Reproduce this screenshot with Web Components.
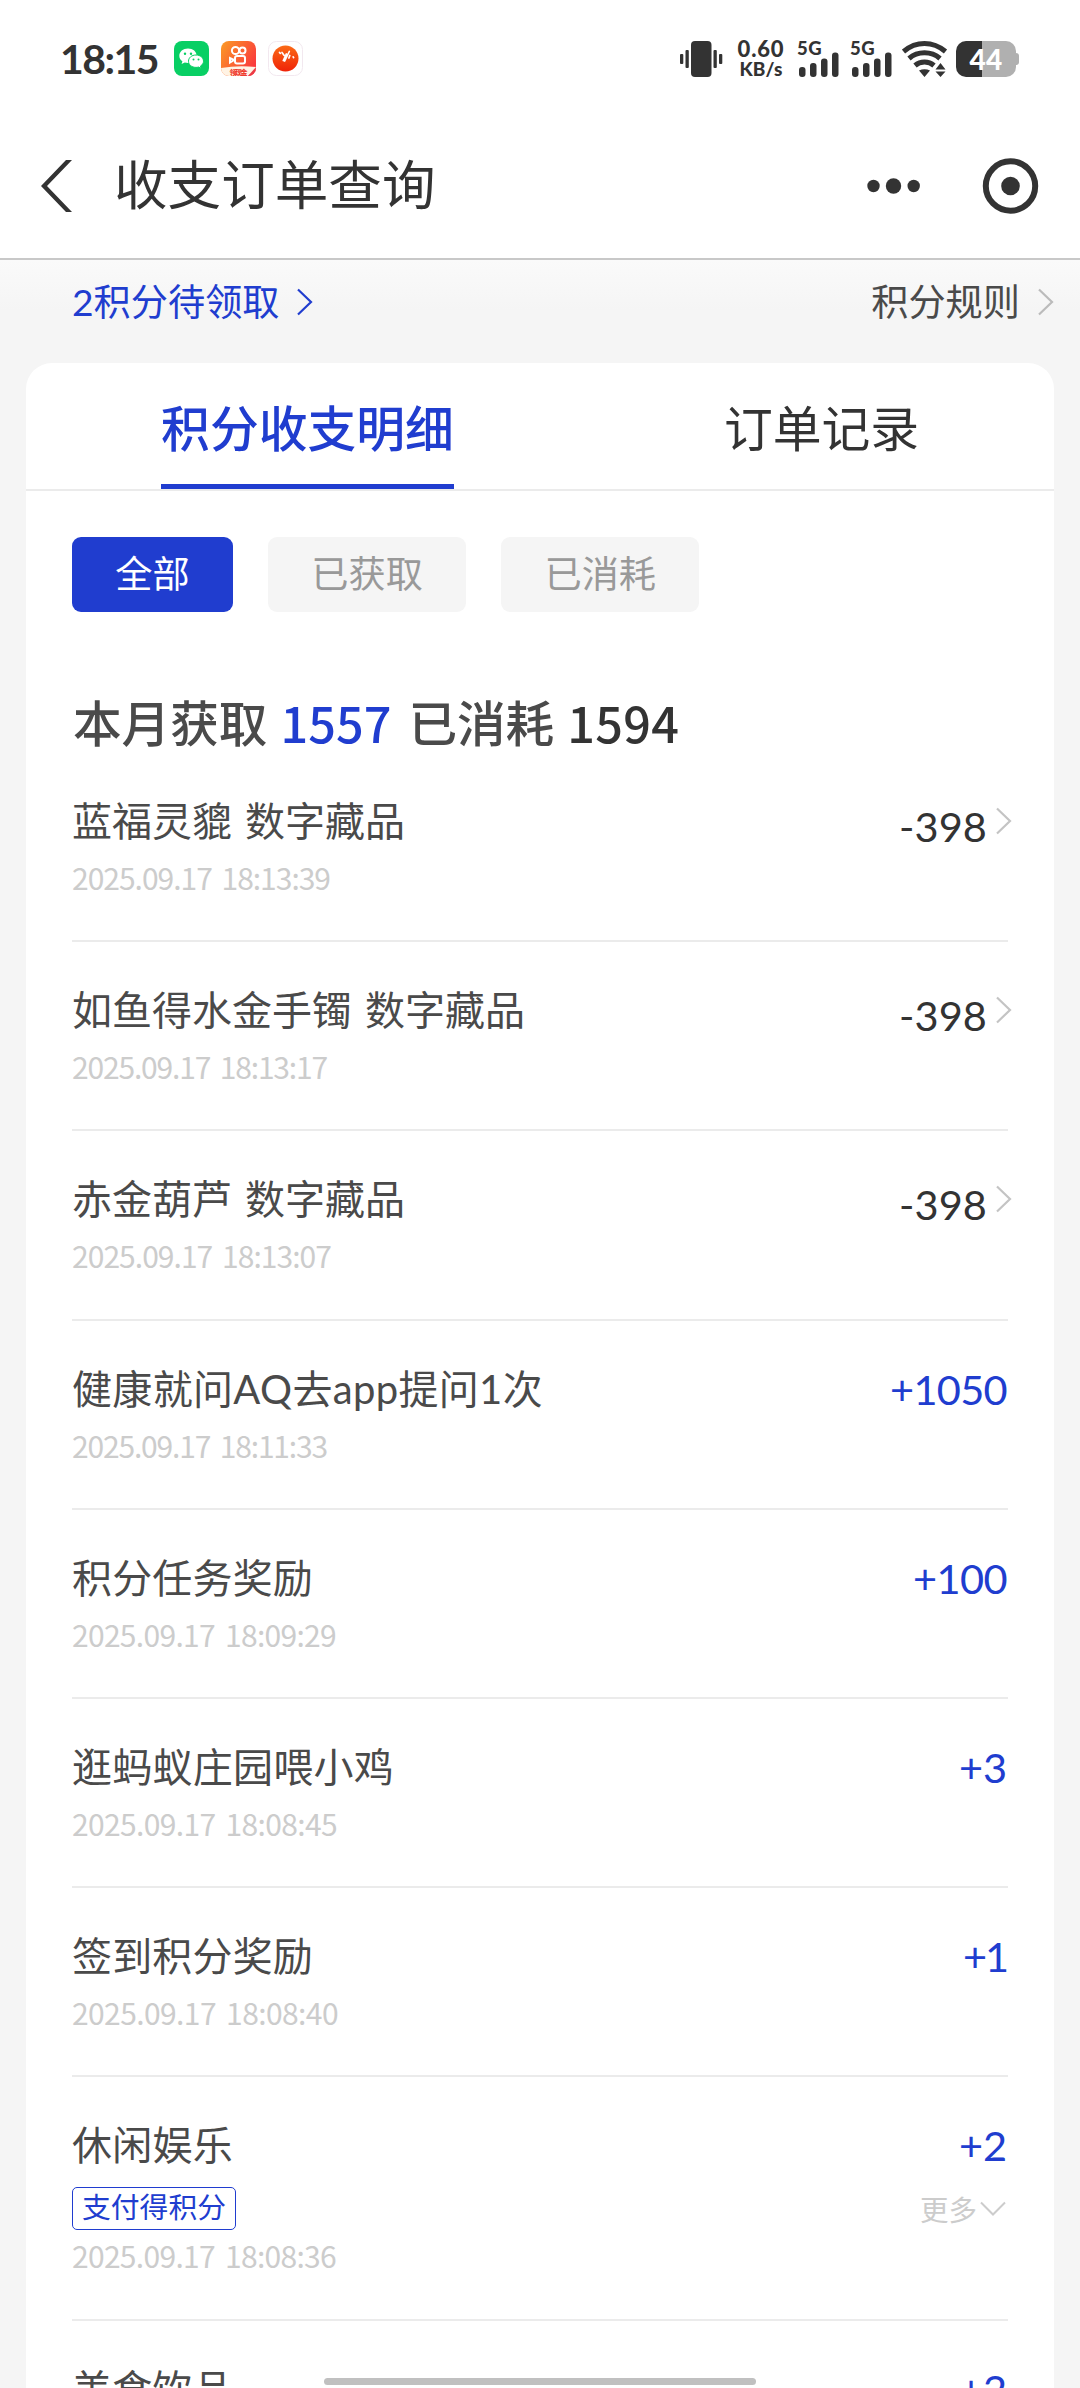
<!DOCTYPE html>
<html lang="zh-CN">
<head>
<meta charset="utf-8">
<title>收支订单查询</title>
<style>
  html, body { margin: 0; }
  body {
    width: 1080px; height: 2388px; overflow: hidden; background: #f5f5f5; color: #333;
    font-family: Lato, "Noto Sans CJK SC", sans-serif;
    --blue: #203dcf; --line: #ebebeb;
  }
</style>
</head>
<body>
<points-page>
  <status-bar slot="top"></status-bar>
  <nav-bar slot="top">收支订单查询</nav-bar>
  <claim-bar slot="top">
    <span slot="claim">2积分待领取</span>
    <span slot="rules">积分规则</span>
  </claim-bar>
  <tab-strip>
    <tab-item active>积分收支明细</tab-item>
    <tab-item>订单记录</tab-item>
  </tab-strip>
  <chip-row>
    <filter-chip active>全部</filter-chip>
    <filter-chip>已获取</filter-chip>
    <filter-chip>已消耗</filter-chip>
  </chip-row>
  <month-summary got="1557" used="1594"></month-summary>
  <record-row w="333" date="2025.09.17 18:13:39" dw="258" amount="-398" aw="88">蓝福灵貔 数字藏品</record-row>
  <record-row w="453" date="2025.09.17 18:13:17" dw="255" amount="-398" aw="88">如鱼得水金手镯 数字藏品</record-row>
  <record-row w="333" date="2025.09.17 18:13:07" dw="259" amount="-398" aw="88">赤金葫芦 数字藏品</record-row>
  <record-row w="471" date="2025.09.17 18:11:33" dw="255" amount="+1050" aw="117">健康就问AQ去app提问1次</record-row>
  <record-row w="241" date="2025.09.17 18:09:29" dw="264" amount="+100" aw="94">积分任务奖励</record-row>
  <record-row w="322" date="2025.09.17 18:08:45" dw="265" amount="+3" aw="48">逛蚂蚁庄园喂小鸡</record-row>
  <record-row w="241" date="2025.09.17 18:08:40" dw="266" amount="+1" aw="44">签到积分奖励</record-row>
  <record-row w="161" date="2025.09.17 18:08:36" dw="264" amount="+2" aw="48" tag="支付得积分">休闲娱乐</record-row>
  <record-row w="161" amount="+2" aw="48">美食饮品</record-row>
</points-page>

<script>
// small base: every element just stamps its own view into an open root
class View extends HTMLElement {
  connectedCallback() {
    if (this.shadowRoot) return;
    this.attachShadow({ mode: 'open' }).innerHTML = this.view();
  }
  attr(n) { return this.getAttribute(n) || ''; }
}

// <fit-text w="120"> spreads or tightens its letters until the line is w px wide
class FitText extends HTMLElement {
  connectedCallback() {
    if (!this.shadowRoot) {
      this.attachShadow({ mode: 'open' }).innerHTML = `<style>
        :host{display:inline-block;white-space:nowrap}
      </style><slot></slot>`;
    }
    const n = [...this.textContent].length;
    const w = +this.getAttribute('w');
    if (w && n) this.style.letterSpacing = (w - this.getBoundingClientRect().width) / n + 'px';
  }
}
customElements.define('fit-text', FitText);

class ChevronIcon extends View {
  view() {
    const down = this.hasAttribute('down');
    return `<style>:host{display:block;flex:none}svg{display:block}</style>` + (down
      ? `<svg width="26" height="16" viewBox="0 0 26 16"><path d="M1 1.5 13 13.5 25 1.5" fill="none" stroke="currentColor" stroke-width="2"/></svg>`
      : `<svg width="16" height="28" viewBox="0 0 16 28"><path d="M1 1.5 14 14 1 26.5" fill="none" stroke="currentColor" stroke-width="2.2"/></svg>`);
  }
}
customElements.define('chevron-icon', ChevronIcon);

class StatusBar extends View {
  view() {
    const bars = `<svg width="42" height="36" viewBox="0 0 42 36"><g fill="#333">
      <rect x="2" y="26" width="6.5" height="10" rx="3"/><rect x="13" y="22" width="6.5" height="14" rx="3"/>
      <rect x="24" y="17.5" width="6.5" height="18.5" rx="3"/><rect x="35" y="11.5" width="6.5" height="24.5" rx="3"/></g></svg>`;
    return `<style>
      :host{display:flex;height:118px;background:#fff;box-sizing:border-box;padding:41px 61px 0 60px;align-items:flex-start;color:#333}
      svg{display:block;flex:none}
      .time{font-size:41px;font-weight:700;line-height:35px;height:36px;width:114px}
      .apps{display:flex;gap:12px}
      .right{display:flex;margin-left:auto}
      .speed{width:48px;margin-left:14px;font-weight:900;text-align:center;font-size:22px;line-height:16px;white-space:nowrap}
      .speed div:last-child{font-size:19px;line-height:19px;margin-top:2px;font-weight:900}
      .sig{display:grid;margin-left:11px;width:42px}
      .sig>*{grid-area:1/1}
      .sig span{font-size:18.5px;line-height:14px;font-weight:900}
      .bat{display:flex;margin-left:8px}
      .cell{width:60px;height:36px;border-radius:10px;background:linear-gradient(90deg,#333 26px,#b0b0b0 26px);color:#fff;
        font-weight:900;font-size:28px;line-height:36px;text-align:center}
      .cap{width:3px;height:12px;margin-top:12px;background:#b0b0b0;border-radius:0 3px 3px 0}
    </style>
    <div class="time"><fit-text w="98">18:15</fit-text></div>
    <div class="apps">
      <svg width="35" height="35" viewBox="0 0 35 35"><rect width="35" height="35" rx="8" fill="#08cf64"/>
        <path d="M14 7.500c-5 0-8.700 3.200-8.700 7.200 0 2.300 1.200 4.200 3.100 5.500l-.8 2.800 3.200-1.600c1 .3 2.100.5 3.200.5 5 0 8.700-3.200 8.700-7.200S19 7.500 14 7.500z" fill="#fff"/>
        <path d="M22 14c-4.300 0-7.500 2.700-7.500 6.200s3.200 6.200 7.500 6.200c.9 0 1.700-.1 2.500-.4l2.600 1.400-.6-2.400c1.900-1.100 3-2.800 3-4.800 0-3.500-3.200-6.200-7.500-6.200z" fill="#fff" stroke="#08cf64"/>
        <g fill="#08cf64"><circle cx="11" cy="12.800" r="1.200"/><circle cx="17" cy="12.800" r="1.200"/><circle cx="19.500" cy="18.500" r="1"/><circle cx="24.500" cy="18.500" r="1"/></g></svg>
      <svg width="35" height="35" viewBox="0 0 35 35"><defs><linearGradient id="k" x1="0" x2="1" y1="0" y2=".6"><stop stop-color="#fb9b24"/><stop offset="1" stop-color="#fa3a3c"/></linearGradient>
        <clipPath id="c"><rect width="35" height="35" rx="8"/></clipPath></defs>
        <g clip-path="url(#c)"><rect width="35" height="35" fill="url(#k)"/>
        <path d="M0 27q17-3 35-1v2l-8 7H0z" fill="#fff3e4"/><path d="M27 35 35 26v9z" fill="#ec3b45"/>
        <g fill="none" stroke="#fff" stroke-width="2"><circle cx="14.500" cy="9.500" r="3.600"/><circle cx="21.500" cy="9.500" r="3"/><rect x="14" y="15" width="10" height="7.500" rx="2"/><path d="M13 19 9 17v4.500z"/></g></g>
        <text x="8.500" y="33.500" font-size="7" font-weight="900" fill="#ef3d2f" font-family="Noto Sans CJK SC" textLength="18">领现金</text></svg>
      <svg width="35" height="35" viewBox="0 0 35 35"><defs><linearGradient id="r" x1="0" x2="0" y1="0" y2="1"><stop stop-color="#fb6a16"/><stop offset="1" stop-color="#ef2308"/></linearGradient></defs>
        <rect x=".5" y=".5" width="34" height="34" rx="8" fill="#fff" stroke="#f2e8ef"/>
        <circle cx="17.500" cy="17.500" r="13" fill="url(#r)"/>
        <path d="M11.500 11.500l.8.900M14 11.500l2 2.800M18.300 13l-3 6.500M21.300 10.500l-4.600 9.500M21.800 14.500l-.9 2.500M25.200 15.800l.4.800" stroke="#fff" stroke-width="1.700" stroke-linecap="round" fill="none"/></svg>
    </div>
    <div class="right">
      <svg width="43" height="36" viewBox="0 0 43 36"><g fill="#333"><rect x="11" y="0" width="20.500" height="36" rx="4"/>
        <rect x="0" y="13" width="3.300" height="10" rx="1"/><rect x="5.500" y="9" width="3.300" height="18" rx="1"/>
        <rect x="33.500" y="9" width="3.300" height="18" rx="1"/><rect x="39" y="13" width="3.300" height="10" rx="1"/></g></svg>
      <div class="speed"><div><fit-text w="47">0.60</fit-text></div><div><fit-text w="43">KB/s</fit-text></div></div>
      <div class="sig" style="margin-left:12px">${bars}<span><fit-text w="25">5G</fit-text></span></div>
      <div class="sig">${bars}<span><fit-text w="25">5G</fit-text></span></div>
      <svg width="46" height="36" viewBox="0 0 46 36" style="margin-left:10px"><g fill="none" stroke="#333" stroke-width="5">
        <path d="M1.500 10.500Q11 2.500 22.500 2.500T43.500 10.500"/><path d="M7 17.500Q13.500 11.800 22.500 11.800T38 17.500"/><path d="M13 24.500Q17 21 22.500 21T32 24.500"/></g>
        <path d="M17 29.500q5.500-2.500 11 0L22.500 36zM33.500 28.500 38.500 22l5 6.500zM33.500 30.500h10l-5 5.500z" fill="#333"/></svg>
      <div class="bat"><div class="cell"><fit-text w="33">44</fit-text></div><div class="cap"></div></div>
    </div>`;
  }
}
customElements.define('status-bar', StatusBar);

class NavBar extends View {
  view() {
    return `<style>
      :host{display:flex;align-items:center;height:142px;box-sizing:border-box;padding:0 40px 4px;background:#fff;border-bottom:2px solid #c8c8c8}
      svg{display:block}
      .title{font-size:53.600px;line-height:70px;margin-left:42px;flex:1;padding-bottom:4px}
      .menu{margin-right:61px}
    </style>
    <svg width="32" height="52" viewBox="0 0 32 52"><path d="M26 0h6L7 26l25 26h-6L1 26z" fill="#333"/></svg>
    <div class="title"><slot></slot></div>
    <svg class="menu" width="54" height="16" viewBox="0 0 54 16"><g fill="#333"><circle cx="6.500" cy="8" r="6.200"/><circle cx="26.500" cy="8" r="7.700"/><circle cx="46.700" cy="8" r="6.200"/></g></svg>
    <svg width="58" height="58" viewBox="0 0 58 58"><circle cx="28.500" cy="29" r="24.700" fill="none" stroke="#333" stroke-width="6"/><circle cx="28.500" cy="29" r="9.300" fill="#333"/></svg>`;
  }
}
customElements.define('nav-bar', NavBar);

class ClaimBar extends View {
  view() {
    return `<style>
      :host{display:flex;align-items:center;justify-content:space-between;height:103px;box-sizing:border-box;
        padding:0 26px 20px 72px;background:linear-gradient(#fafafa,#f5f5f5 50px);font-size:37.200px;line-height:50px}
      div{display:flex;align-items:center}
      .claim{color:var(--blue)} .rules{color:#4a4a4a}
      .claim chevron-icon{margin-left:17px}
      .rules chevron-icon{margin-left:18px;color:#bbb}
    </style>
    <div class="claim"><slot name="claim"></slot><chevron-icon></chevron-icon></div>
    <div class="rules"><slot name="rules"></slot><chevron-icon></chevron-icon></div>`;
  }
}
customElements.define('claim-bar', ClaimBar);

class TabStrip extends View {
  view() {
    return `<style>:host{display:flex;height:128px;box-sizing:border-box;border-bottom:2px solid var(--line)}</style><slot></slot>`;
  }
}
customElements.define('tab-strip', TabStrip);

class TabItem extends View {
  view() {
    return `<style>
      :host{flex:1 0 0;display:flex;justify-content:center;padding-left:49px;font-size:48.800px}
      div{box-sizing:border-box;height:126px;line-height:131px;border-bottom:5px solid transparent;white-space:nowrap}
      :host([active]) div{color:var(--blue);border-color:var(--blue);font-weight:500}
    </style><div><slot></slot></div>`;
  }
}
customElements.define('tab-item', TabItem);

class ChipRow extends View {
  view() { return `<style>:host{display:flex;gap:35px;padding:46px 46px 0}</style><slot></slot>`; }
}
customElements.define('chip-row', ChipRow);

class FilterChip extends View {
  view() {
    return `<style>
      :host{display:block;height:75px;line-height:73px;padding:0 43.300px;border-radius:9px;background:#f5f5f5;color:#999;font-size:37.200px}
      :host([active]){background:var(--blue);color:#fff}
    </style><slot></slot>`;
  }
}
customElements.define('filter-chip', FilterChip);

class MonthSummary extends View {
  view() {
    return `<style>
      :host{display:flex;height:141px;box-sizing:border-box;padding:76px 46px 0 47px;font-size:48.600px;line-height:70px;font-weight:500;color:#4a4a4a;white-space:nowrap}
      .n{font-family:"Noto Sans CJK SC",sans-serif;line-height:69px}
      .got{color:var(--blue);width:128px;margin-left:13px}
      .used{color:#333;margin-left:13px}
    </style>
    <span>本月获取</span><span class="n got"><fit-text w="111">${this.attr('got')}</fit-text></span>
    <span>已消耗</span><span class="n used"><fit-text w="112">${this.attr('used')}</fit-text></span>`;
  }
}
customElements.define('month-summary', MonthSummary);

class RecordRow extends View {
  view() {
    const amount = this.attr('amount'), tag = this.attr('tag'), date = this.attr('date');
    const spent = amount[0] === '-';
    return `<style>
      :host{display:block;height:${tag ? 243.8 : 189.2}px;box-sizing:border-box;margin:0 46px;padding-top:42px;border-bottom:2px solid var(--line)}
      .line{display:flex;justify-content:space-between;align-items:center;height:52px;white-space:nowrap}
      .title{font-size:40px;line-height:52px;color:#4a4a4a;word-spacing:3px}
      .amount{display:flex;font-size:41.500px;line-height:50px;color:var(--blue)}
      .amount:not(.spent){margin-right:1px}
      .spent{color:#333;margin-right:-4px}
      .spent fit-text{position:relative;top:5px}
      .spent chevron-icon{color:#c4c4c4;margin:11px 0 0 9px}
      .date{font:30px/36px "Noto Sans CJK SC",sans-serif;word-spacing:4px;color:#ccc;margin-top:12px}
      .tags{height:43px;margin-top:16px}
      .tags+.date{margin-top:7px}
      .tag{box-sizing:border-box;height:43px;border:1px solid var(--blue);border-radius:5px;padding:0 9px;line-height:39px;font-size:28.800px;color:var(--blue)}
      .more{display:flex;align-items:center;color:#ccc;font-size:28.500px;gap:3px;padding-right:2px}
    </style>
    <div class="line"><div class="title"><fit-text w="${this.attr('w')}">${this.textContent}</fit-text></div>
      <div class="amount ${spent ? 'spent' : ''}"><fit-text w="${this.attr('aw')}">${amount}</fit-text>${spent ? '<chevron-icon></chevron-icon>' : ''}</div></div>
    ${tag ? `<div class="line tags"><div class="tag">${tag}</div><div class="more">更多<chevron-icon down></chevron-icon></div></div>` : ''}
    ${date ? `<div class="date"><fit-text w="${this.attr('dw')}">${date}</fit-text></div>` : ''}`;
  }
}
customElements.define('record-row', RecordRow);

class PointsPage extends View {
  view() {
    return `<style>
      :host{display:flex;flex-direction:column;height:2388px;overflow:hidden;position:relative}
      main{flex:1;min-height:0;overflow:hidden;margin:0 26px;background:#fff;border-radius:26px 26px 0 0}
      .home{position:absolute;left:324px;bottom:3px;width:432px;height:7px;border-radius:4px;background:#c0c0c0}
    </style>
    <slot name="top"></slot><main><slot></slot></main><div class="home"></div>`;
  }
}
customElements.define('points-page', PointsPage);
</script>
</body>
</html>
